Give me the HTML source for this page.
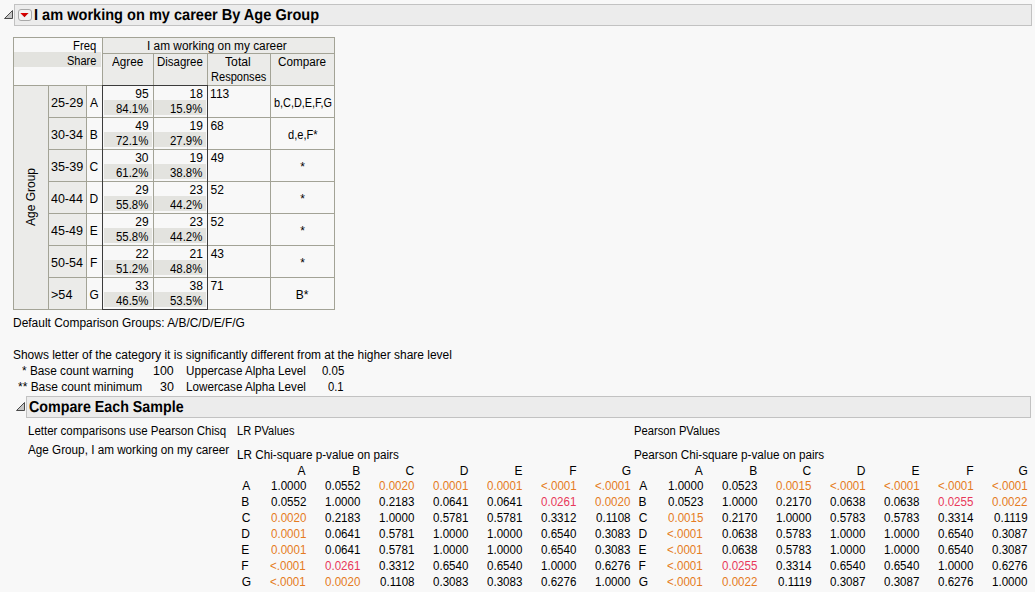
<!DOCTYPE html>
<html><head><meta charset="utf-8"><style>
html,body{margin:0;padding:0;}
body{width:1035px;height:592px;overflow:hidden;position:relative;background:#f8f8f8;font-family:"Liberation Sans",sans-serif;font-size:12px;line-height:16px;color:#000;}
.t{position:absolute;white-space:nowrap;transform-origin:0 0;}
</style></head><body>
<div style="position:absolute;left:14px;top:4px;width:1018px;height:22px;box-sizing:border-box;border:1px solid #c2c2c2;background:#ececec;"></div>
<svg style="position:absolute;left:0;top:0" width="40" height="30"><path d="M4.5 18.5 L12.5 10.5 L12.5 18.5 Z" fill="#c4c4c4" stroke="#4a4a4a" stroke-width="1" stroke-linejoin="round"/>
<rect x="18.5" y="9.5" width="13" height="11" rx="2.5" fill="#f2f2f2" stroke="#a8a8a8"/>
<defs><linearGradient id="rg" x1="0" y1="0" x2="1" y2="1"><stop offset="0" stop-color="#f00000"/><stop offset="1" stop-color="#a80000"/></linearGradient></defs><path d="M20.3 12.9 L28.6 12.9 L24.45 17.2 Z" fill="url(#rg)"/></svg>
<div style="position:absolute;left:13px;top:37px;width:89px;height:48px;background:#f8f8f8;"></div>
<div style="position:absolute;left:14px;top:52px;width:87px;height:15px;background:#e3e3df;"></div>
<div style="position:absolute;left:102px;top:37px;width:232px;height:48px;background:#ebebe9;"></div>
<div style="position:absolute;left:13px;top:85px;width:35px;height:224px;background:#ebebe9;"></div>
<div style="position:absolute;left:48px;top:85px;width:38px;height:224px;background:#ebebe9;"></div>
<div style="position:absolute;left:86px;top:85px;width:16px;height:224px;background:#f8f8f8;"></div>
<div style="position:absolute;left:102px;top:85px;width:232px;height:224px;background:#f8f8f8;"></div>
<div style="position:absolute;left:104px;top:100px;width:48px;height:15px;background:#e3e3df;"></div>
<div style="position:absolute;left:154px;top:100px;width:52px;height:15px;background:#e3e3df;"></div>
<div style="position:absolute;left:104px;top:132px;width:48px;height:15px;background:#e3e3df;"></div>
<div style="position:absolute;left:154px;top:132px;width:52px;height:15px;background:#e3e3df;"></div>
<div style="position:absolute;left:104px;top:164px;width:48px;height:15px;background:#e3e3df;"></div>
<div style="position:absolute;left:154px;top:164px;width:52px;height:15px;background:#e3e3df;"></div>
<div style="position:absolute;left:104px;top:196px;width:48px;height:15px;background:#e3e3df;"></div>
<div style="position:absolute;left:154px;top:196px;width:52px;height:15px;background:#e3e3df;"></div>
<div style="position:absolute;left:104px;top:228px;width:48px;height:15px;background:#e3e3df;"></div>
<div style="position:absolute;left:154px;top:228px;width:52px;height:15px;background:#e3e3df;"></div>
<div style="position:absolute;left:104px;top:260px;width:48px;height:15px;background:#e3e3df;"></div>
<div style="position:absolute;left:154px;top:260px;width:52px;height:15px;background:#e3e3df;"></div>
<div style="position:absolute;left:104px;top:292px;width:48px;height:15px;background:#e3e3df;"></div>
<div style="position:absolute;left:154px;top:292px;width:52px;height:15px;background:#e3e3df;"></div>
<div style="position:absolute;left:13px;top:37px;width:322px;height:1px;background:#a3a396;"></div>
<div style="position:absolute;left:102px;top:53px;width:232px;height:1px;background:#a3a396;"></div>
<div style="position:absolute;left:13px;top:85px;width:322px;height:1px;background:#a3a396;"></div>
<div style="position:absolute;left:48px;top:117px;width:287px;height:1px;background:#a3a396;"></div>
<div style="position:absolute;left:48px;top:149px;width:287px;height:1px;background:#a3a396;"></div>
<div style="position:absolute;left:48px;top:181px;width:287px;height:1px;background:#a3a396;"></div>
<div style="position:absolute;left:48px;top:213px;width:287px;height:1px;background:#a3a396;"></div>
<div style="position:absolute;left:48px;top:245px;width:287px;height:1px;background:#a3a396;"></div>
<div style="position:absolute;left:48px;top:277px;width:287px;height:1px;background:#a3a396;"></div>
<div style="position:absolute;left:13px;top:309px;width:322px;height:1px;background:#a3a396;"></div>
<div style="position:absolute;left:13px;top:37px;width:1px;height:273px;background:#a3a396;"></div>
<div style="position:absolute;left:102px;top:37px;width:1px;height:48px;background:#a3a396;"></div>
<div style="position:absolute;left:153px;top:53px;width:1px;height:32px;background:#a3a396;"></div>
<div style="position:absolute;left:207px;top:53px;width:1px;height:32px;background:#a3a396;"></div>
<div style="position:absolute;left:270px;top:53px;width:1px;height:32px;background:#a3a396;"></div>
<div style="position:absolute;left:48px;top:85px;width:1px;height:224px;background:#a3a396;"></div>
<div style="position:absolute;left:86px;top:85px;width:1px;height:224px;background:#a3a396;"></div>
<div style="position:absolute;left:153px;top:85px;width:1px;height:224px;background:#a3a396;"></div>
<div style="position:absolute;left:270px;top:85px;width:1px;height:224px;background:#a3a396;"></div>
<div style="position:absolute;left:334px;top:37px;width:1px;height:273px;background:#a3a396;"></div>
<div style="position:absolute;left:102px;top:85px;width:106px;height:225px;box-sizing:border-box;border:1px solid #3c3c3c;"></div>
<div class="t" style="left:-70px;top:190px;width:200px;text-align:center;transform:rotate(-90deg);transform-origin:100px 7px;">Age Group</div>
<div style="position:absolute;left:26px;top:396px;width:1005px;height:22px;box-sizing:border-box;border:1px solid #c2c2c2;background:#ececec;"></div>
<svg style="position:absolute;left:0;top:390px" width="30" height="30"><path d="M16.5 20.5 L24.5 12.5 L24.5 20.5 Z" fill="#c4c4c4" stroke="#4a4a4a" stroke-width="1" stroke-linejoin="round"/></svg>
<div class="t" style="left:33.99px;top:8px;font-size:15.9px;font-weight:bold;text-rendering:geometricPrecision;transform:scaleX(0.9163);">I am working on my career By Age Group</div>
<div class="t" style="left:73.06px;top:38px;transform:scaleX(0.9389);">Freq</div>
<div class="t" style="left:67.05px;top:53px;transform:scaleX(0.9191);">Share</div>
<div class="t" style="left:147.01px;top:38px;transform:scaleX(0.9886);">I am working on my career</div>
<div class="t" style="left:112.10px;top:54px;transform:scaleX(0.9777);">Agree</div>
<div class="t" style="left:156.65px;top:54px;transform:scaleX(0.9548);">Disagree</div>
<div class="t" style="left:225.40px;top:54px;transform:scaleX(1.0165);">Total</div>
<div class="t" style="left:210.98px;top:69px;transform:scaleX(0.9215);">Responses</div>
<div class="t" style="left:277.61px;top:54px;transform:scaleX(0.9751);">Compare</div>
<div class="t" style="left:50.67px;top:95px;transform:scaleX(1.0542);">25-29</div>
<div class="t" style="left:90.00px;top:95px;">A</div>
<div class="t" style="left:135.30px;top:86px;">95</div>
<div class="t" style="left:116.18px;top:101px;transform:scaleX(0.9500);">84.1%</div>
<div class="t" style="left:189.50px;top:86px;">18</div>
<div class="t" style="left:170.38px;top:101px;transform:scaleX(0.9500);">15.9%</div>
<div class="t" style="left:210.10px;top:86px;">113</div>
<div class="t" style="left:274.07px;top:95px;transform:scaleX(0.9069);">b,C,D,E,F,G</div>
<div class="t" style="left:50.78px;top:127px;transform:scaleX(1.0436);">30-34</div>
<div class="t" style="left:89.80px;top:127px;">B</div>
<div class="t" style="left:135.30px;top:118px;">49</div>
<div class="t" style="left:116.18px;top:133px;transform:scaleX(0.9500);">72.1%</div>
<div class="t" style="left:189.50px;top:118px;">19</div>
<div class="t" style="left:170.38px;top:133px;transform:scaleX(0.9500);">27.9%</div>
<div class="t" style="left:210.40px;top:118px;">68</div>
<div class="t" style="left:288.04px;top:127px;transform:scaleX(0.9233);">d,e,F*</div>
<div class="t" style="left:50.77px;top:159px;transform:scaleX(1.0507);">35-39</div>
<div class="t" style="left:89.60px;top:159px;">C</div>
<div class="t" style="left:135.20px;top:150px;">30</div>
<div class="t" style="left:116.18px;top:165px;transform:scaleX(0.9500);">61.2%</div>
<div class="t" style="left:189.50px;top:150px;">19</div>
<div class="t" style="left:170.38px;top:165px;transform:scaleX(0.9500);">38.8%</div>
<div class="t" style="left:210.70px;top:150px;">49</div>
<div class="t" style="left:300.15px;top:159px;">*</div>
<div class="t" style="left:50.99px;top:191px;transform:scaleX(1.0367);">40-44</div>
<div class="t" style="left:89.45px;top:191px;">D</div>
<div class="t" style="left:135.30px;top:182px;">29</div>
<div class="t" style="left:116.18px;top:197px;transform:scaleX(0.9500);">55.8%</div>
<div class="t" style="left:189.50px;top:182px;">23</div>
<div class="t" style="left:170.38px;top:197px;transform:scaleX(0.9500);">44.2%</div>
<div class="t" style="left:210.50px;top:182px;">52</div>
<div class="t" style="left:300.15px;top:191px;">*</div>
<div class="t" style="left:50.99px;top:223px;transform:scaleX(1.0436);">45-49</div>
<div class="t" style="left:89.75px;top:223px;">E</div>
<div class="t" style="left:135.30px;top:214px;">29</div>
<div class="t" style="left:116.18px;top:229px;transform:scaleX(0.9500);">55.8%</div>
<div class="t" style="left:189.50px;top:214px;">23</div>
<div class="t" style="left:170.38px;top:229px;transform:scaleX(0.9500);">44.2%</div>
<div class="t" style="left:210.50px;top:214px;">52</div>
<div class="t" style="left:300.15px;top:223px;">*</div>
<div class="t" style="left:50.78px;top:255px;transform:scaleX(1.0436);">50-54</div>
<div class="t" style="left:90.10px;top:255px;">F</div>
<div class="t" style="left:135.40px;top:246px;">22</div>
<div class="t" style="left:116.18px;top:261px;transform:scaleX(0.9500);">51.2%</div>
<div class="t" style="left:189.50px;top:246px;">21</div>
<div class="t" style="left:170.38px;top:261px;transform:scaleX(0.9500);">48.8%</div>
<div class="t" style="left:210.70px;top:246px;">43</div>
<div class="t" style="left:300.15px;top:255px;">*</div>
<div class="t" style="left:51.27px;top:287px;transform:scaleX(1.0515);">&gt;54</div>
<div class="t" style="left:89.50px;top:287px;">G</div>
<div class="t" style="left:135.30px;top:278px;">33</div>
<div class="t" style="left:116.18px;top:293px;transform:scaleX(0.9500);">46.5%</div>
<div class="t" style="left:189.50px;top:278px;">38</div>
<div class="t" style="left:170.38px;top:293px;transform:scaleX(0.9500);">53.5%</div>
<div class="t" style="left:210.40px;top:278px;">71</div>
<div class="t" style="left:295.75px;top:287px;">B*</div>
<div class="t" style="left:13.00px;top:315px;transform:scaleX(0.9961);">Default Comparison Groups: A/B/C/D/E/F/G</div>
<div class="t" style="left:12.90px;top:347px;transform:scaleX(0.9959);">Shows letter of the category it is significantly different from at the higher share level</div>
<div class="t" style="left:21.70px;top:363px;transform:scaleX(0.9849);">* Base count warning</div>
<div class="t" style="left:152.97px;top:363px;transform:scaleX(1.0321);">100</div>
<div class="t" style="left:186.43px;top:363px;transform:scaleX(0.9712);">Uppercase Alpha Level</div>
<div class="t" style="left:321.92px;top:363px;transform:scaleX(0.9552);">0.05</div>
<div class="t" style="left:17.80px;top:379px;transform:scaleX(0.9968);">** Base count minimum</div>
<div class="t" style="left:159.78px;top:379px;transform:scaleX(1.0403);">30</div>
<div class="t" style="left:186.33px;top:379px;transform:scaleX(0.9720);">Lowercase Alpha Level</div>
<div class="t" style="left:327.63px;top:379px;transform:scaleX(0.9359);">0.1</div>
<div class="t" style="left:28.77px;top:400px;font-size:15.9px;font-weight:bold;text-rendering:geometricPrecision;transform:scaleX(0.8977);">Compare Each Sample</div>
<div class="t" style="left:27.74px;top:423px;transform:scaleX(0.9585);">Letter comparisons use Pearson Chisq</div>
<div class="t" style="left:28.40px;top:442px;transform:scaleX(0.9757);">Age Group, I am working on my career</div>
<div class="t" style="left:237.08px;top:423px;transform:scaleX(0.9197);">LR PValues</div>
<div class="t" style="left:237.03px;top:447px;transform:scaleX(0.9745);">LR Chi-square p-value on pairs</div>
<div class="t" style="left:633.97px;top:423px;transform:scaleX(0.9347);">Pearson PValues</div>
<div class="t" style="left:633.93px;top:447px;transform:scaleX(0.9732);">Pearson Chi-square p-value on pairs</div>
<div class="t" style="left:297.60px;top:463px;">A</div>
<div class="t" style="left:352.20px;top:463px;">B</div>
<div class="t" style="left:405.50px;top:463px;">C</div>
<div class="t" style="left:459.70px;top:463px;">D</div>
<div class="t" style="left:514.40px;top:463px;">E</div>
<div class="t" style="left:569.20px;top:463px;">F</div>
<div class="t" style="left:621.70px;top:463px;">G</div>
<div class="t" style="left:242.20px;top:478px;">A</div>
<div class="t" style="left:270.57px;top:478px;transform:scaleX(0.9650);">1.0000</div>
<div class="t" style="left:324.76px;top:478px;transform:scaleX(0.9650);">0.0552</div>
<div class="t" style="left:378.77px;top:478px;color:#e57b22;transform:scaleX(0.9650);">0.0020</div>
<div class="t" style="left:432.96px;top:478px;color:#e57b22;transform:scaleX(0.9650);">0.0001</div>
<div class="t" style="left:487.06px;top:478px;color:#e57b22;transform:scaleX(0.9650);">0.0001</div>
<div class="t" style="left:540.78px;top:478px;color:#e57b22;transform:scaleX(0.9650);">&lt;.0001</div>
<div class="t" style="left:594.88px;top:478px;color:#e57b22;transform:scaleX(0.9650);">&lt;.0001</div>
<div class="t" style="left:241.30px;top:494px;">B</div>
<div class="t" style="left:270.66px;top:494px;transform:scaleX(0.9650);">0.0552</div>
<div class="t" style="left:324.67px;top:494px;transform:scaleX(0.9650);">1.0000</div>
<div class="t" style="left:378.77px;top:494px;transform:scaleX(0.9650);">0.2183</div>
<div class="t" style="left:432.96px;top:494px;transform:scaleX(0.9650);">0.0641</div>
<div class="t" style="left:487.06px;top:494px;transform:scaleX(0.9650);">0.0641</div>
<div class="t" style="left:541.16px;top:494px;color:#e8385a;transform:scaleX(0.9650);">0.0261</div>
<div class="t" style="left:595.17px;top:494px;color:#e57b22;transform:scaleX(0.9650);">0.0020</div>
<div class="t" style="left:241.70px;top:510px;">C</div>
<div class="t" style="left:270.57px;top:510px;color:#e57b22;transform:scaleX(0.9650);">0.0020</div>
<div class="t" style="left:324.67px;top:510px;transform:scaleX(0.9650);">0.2183</div>
<div class="t" style="left:378.77px;top:510px;transform:scaleX(0.9650);">1.0000</div>
<div class="t" style="left:432.96px;top:510px;transform:scaleX(0.9650);">0.5781</div>
<div class="t" style="left:487.06px;top:510px;transform:scaleX(0.9650);">0.5781</div>
<div class="t" style="left:541.16px;top:510px;transform:scaleX(0.9650);">0.3312</div>
<div class="t" style="left:596.04px;top:510px;transform:scaleX(0.9650);">0.1108</div>
<div class="t" style="left:241.30px;top:526px;">D</div>
<div class="t" style="left:270.66px;top:526px;color:#e57b22;transform:scaleX(0.9650);">0.0001</div>
<div class="t" style="left:324.76px;top:526px;transform:scaleX(0.9650);">0.0641</div>
<div class="t" style="left:378.86px;top:526px;transform:scaleX(0.9650);">0.5781</div>
<div class="t" style="left:432.87px;top:526px;transform:scaleX(0.9650);">1.0000</div>
<div class="t" style="left:486.97px;top:526px;transform:scaleX(0.9650);">1.0000</div>
<div class="t" style="left:541.07px;top:526px;transform:scaleX(0.9650);">0.6540</div>
<div class="t" style="left:595.17px;top:526px;transform:scaleX(0.9650);">0.3083</div>
<div class="t" style="left:241.30px;top:542px;">E</div>
<div class="t" style="left:270.66px;top:542px;color:#e57b22;transform:scaleX(0.9650);">0.0001</div>
<div class="t" style="left:324.76px;top:542px;transform:scaleX(0.9650);">0.0641</div>
<div class="t" style="left:378.86px;top:542px;transform:scaleX(0.9650);">0.5781</div>
<div class="t" style="left:432.87px;top:542px;transform:scaleX(0.9650);">1.0000</div>
<div class="t" style="left:486.97px;top:542px;transform:scaleX(0.9650);">1.0000</div>
<div class="t" style="left:541.07px;top:542px;transform:scaleX(0.9650);">0.6540</div>
<div class="t" style="left:595.17px;top:542px;transform:scaleX(0.9650);">0.3083</div>
<div class="t" style="left:241.30px;top:558px;">F</div>
<div class="t" style="left:270.28px;top:558px;color:#e57b22;transform:scaleX(0.9650);">&lt;.0001</div>
<div class="t" style="left:324.76px;top:558px;color:#e8385a;transform:scaleX(0.9650);">0.0261</div>
<div class="t" style="left:378.86px;top:558px;transform:scaleX(0.9650);">0.3312</div>
<div class="t" style="left:432.87px;top:558px;transform:scaleX(0.9650);">0.6540</div>
<div class="t" style="left:486.97px;top:558px;transform:scaleX(0.9650);">0.6540</div>
<div class="t" style="left:541.07px;top:558px;transform:scaleX(0.9650);">1.0000</div>
<div class="t" style="left:595.17px;top:558px;transform:scaleX(0.9650);">0.6276</div>
<div class="t" style="left:241.70px;top:574px;">G</div>
<div class="t" style="left:270.28px;top:574px;color:#e57b22;transform:scaleX(0.9650);">&lt;.0001</div>
<div class="t" style="left:324.67px;top:574px;color:#e57b22;transform:scaleX(0.9650);">0.0020</div>
<div class="t" style="left:379.64px;top:574px;transform:scaleX(0.9650);">0.1108</div>
<div class="t" style="left:432.87px;top:574px;transform:scaleX(0.9650);">0.3083</div>
<div class="t" style="left:486.97px;top:574px;transform:scaleX(0.9650);">0.3083</div>
<div class="t" style="left:541.07px;top:574px;transform:scaleX(0.9650);">0.6276</div>
<div class="t" style="left:595.17px;top:574px;transform:scaleX(0.9650);">1.0000</div>
<div class="t" style="left:694.80px;top:463px;">A</div>
<div class="t" style="left:749.35px;top:463px;">B</div>
<div class="t" style="left:802.60px;top:463px;">C</div>
<div class="t" style="left:856.75px;top:463px;">D</div>
<div class="t" style="left:911.40px;top:463px;">E</div>
<div class="t" style="left:966.15px;top:463px;">F</div>
<div class="t" style="left:1018.60px;top:463px;">G</div>
<div class="t" style="left:639.30px;top:478px;">A</div>
<div class="t" style="left:667.77px;top:478px;transform:scaleX(0.9650);">1.0000</div>
<div class="t" style="left:721.82px;top:478px;transform:scaleX(0.9650);">0.0523</div>
<div class="t" style="left:775.87px;top:478px;color:#e57b22;transform:scaleX(0.9650);">0.0015</div>
<div class="t" style="left:829.63px;top:478px;color:#e57b22;transform:scaleX(0.9650);">&lt;.0001</div>
<div class="t" style="left:883.68px;top:478px;color:#e57b22;transform:scaleX(0.9650);">&lt;.0001</div>
<div class="t" style="left:937.73px;top:478px;color:#e57b22;transform:scaleX(0.9650);">&lt;.0001</div>
<div class="t" style="left:991.78px;top:478px;color:#e57b22;transform:scaleX(0.9650);">&lt;.0001</div>
<div class="t" style="left:638.40px;top:494px;">B</div>
<div class="t" style="left:667.77px;top:494px;transform:scaleX(0.9650);">0.0523</div>
<div class="t" style="left:721.82px;top:494px;transform:scaleX(0.9650);">1.0000</div>
<div class="t" style="left:775.87px;top:494px;transform:scaleX(0.9650);">0.2170</div>
<div class="t" style="left:829.92px;top:494px;transform:scaleX(0.9650);">0.0638</div>
<div class="t" style="left:883.97px;top:494px;transform:scaleX(0.9650);">0.0638</div>
<div class="t" style="left:938.02px;top:494px;color:#e8385a;transform:scaleX(0.9650);">0.0255</div>
<div class="t" style="left:992.16px;top:494px;color:#e57b22;transform:scaleX(0.9650);">0.0022</div>
<div class="t" style="left:638.80px;top:510px;">C</div>
<div class="t" style="left:667.77px;top:510px;color:#e57b22;transform:scaleX(0.9650);">0.0015</div>
<div class="t" style="left:721.82px;top:510px;transform:scaleX(0.9650);">0.2170</div>
<div class="t" style="left:775.87px;top:510px;transform:scaleX(0.9650);">1.0000</div>
<div class="t" style="left:829.92px;top:510px;transform:scaleX(0.9650);">0.5783</div>
<div class="t" style="left:883.97px;top:510px;transform:scaleX(0.9650);">0.5783</div>
<div class="t" style="left:937.92px;top:510px;transform:scaleX(0.9650);">0.3314</div>
<div class="t" style="left:993.80px;top:510px;transform:scaleX(0.9650);">0.1119</div>
<div class="t" style="left:638.40px;top:526px;">D</div>
<div class="t" style="left:667.48px;top:526px;color:#e57b22;transform:scaleX(0.9650);">&lt;.0001</div>
<div class="t" style="left:721.82px;top:526px;transform:scaleX(0.9650);">0.0638</div>
<div class="t" style="left:775.87px;top:526px;transform:scaleX(0.9650);">0.5783</div>
<div class="t" style="left:829.92px;top:526px;transform:scaleX(0.9650);">1.0000</div>
<div class="t" style="left:883.97px;top:526px;transform:scaleX(0.9650);">1.0000</div>
<div class="t" style="left:938.02px;top:526px;transform:scaleX(0.9650);">0.6540</div>
<div class="t" style="left:992.16px;top:526px;transform:scaleX(0.9650);">0.3087</div>
<div class="t" style="left:638.40px;top:542px;">E</div>
<div class="t" style="left:667.48px;top:542px;color:#e57b22;transform:scaleX(0.9650);">&lt;.0001</div>
<div class="t" style="left:721.82px;top:542px;transform:scaleX(0.9650);">0.0638</div>
<div class="t" style="left:775.87px;top:542px;transform:scaleX(0.9650);">0.5783</div>
<div class="t" style="left:829.92px;top:542px;transform:scaleX(0.9650);">1.0000</div>
<div class="t" style="left:883.97px;top:542px;transform:scaleX(0.9650);">1.0000</div>
<div class="t" style="left:938.02px;top:542px;transform:scaleX(0.9650);">0.6540</div>
<div class="t" style="left:992.16px;top:542px;transform:scaleX(0.9650);">0.3087</div>
<div class="t" style="left:638.40px;top:558px;">F</div>
<div class="t" style="left:667.48px;top:558px;color:#e57b22;transform:scaleX(0.9650);">&lt;.0001</div>
<div class="t" style="left:721.82px;top:558px;color:#e8385a;transform:scaleX(0.9650);">0.0255</div>
<div class="t" style="left:775.77px;top:558px;transform:scaleX(0.9650);">0.3314</div>
<div class="t" style="left:829.92px;top:558px;transform:scaleX(0.9650);">0.6540</div>
<div class="t" style="left:883.97px;top:558px;transform:scaleX(0.9650);">0.6540</div>
<div class="t" style="left:938.02px;top:558px;transform:scaleX(0.9650);">1.0000</div>
<div class="t" style="left:992.07px;top:558px;transform:scaleX(0.9650);">0.6276</div>
<div class="t" style="left:638.80px;top:574px;">G</div>
<div class="t" style="left:667.48px;top:574px;color:#e57b22;transform:scaleX(0.9650);">&lt;.0001</div>
<div class="t" style="left:721.91px;top:574px;color:#e57b22;transform:scaleX(0.9650);">0.0022</div>
<div class="t" style="left:777.60px;top:574px;transform:scaleX(0.9650);">0.1119</div>
<div class="t" style="left:830.01px;top:574px;transform:scaleX(0.9650);">0.3087</div>
<div class="t" style="left:884.06px;top:574px;transform:scaleX(0.9650);">0.3087</div>
<div class="t" style="left:938.02px;top:574px;transform:scaleX(0.9650);">0.6276</div>
<div class="t" style="left:992.07px;top:574px;transform:scaleX(0.9650);">1.0000</div>
</body></html>
